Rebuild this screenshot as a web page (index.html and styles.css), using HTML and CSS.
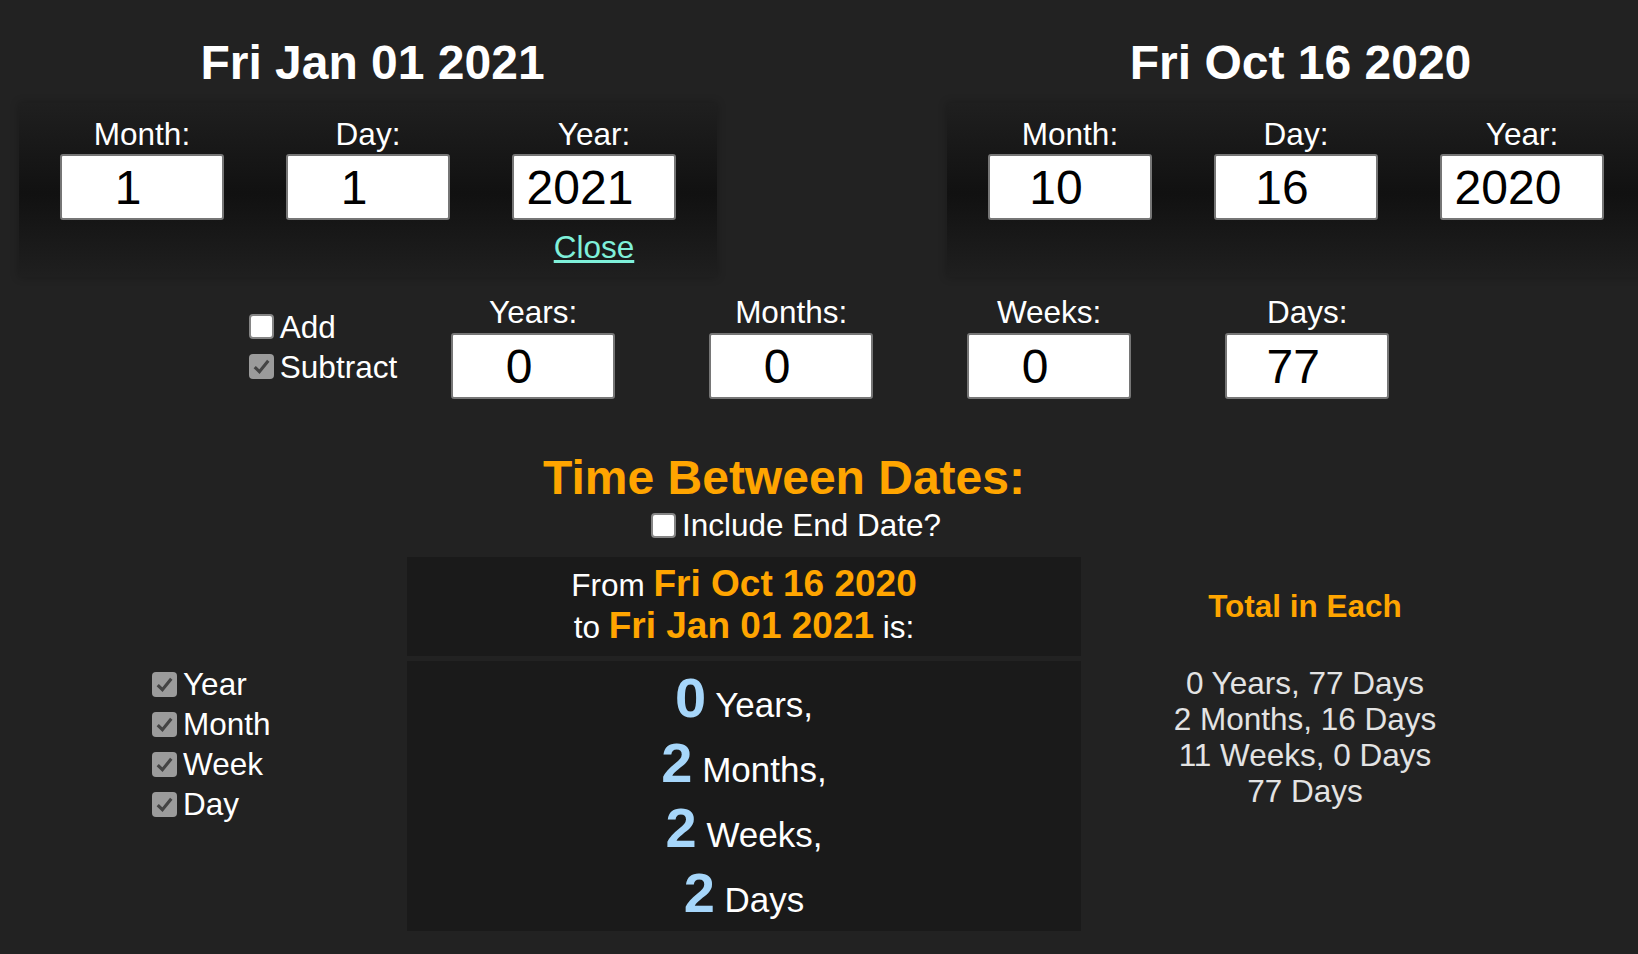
FILE: index.html
```html
<!DOCTYPE html>
<html lang="en">
<head>
    <meta charset="UTF-8">
    <meta name="viewport" content="width=device-width, initial-scale=1.0">
    <title>Date Calculator</title>
    <link rel="stylesheet" href="styles.css">
</head>
<body>
    <div class="dates">
        <div class="date-col">
            <h1 class="date-title">Fri Jan 01 2021</h1>
            <div class="panel">
                <div class="fields">
                    <div class="field">
                        <label>Month:</label>
                        <input class="num" type="text" value="1">
                    </div>
                    <div class="field">
                        <label>Day:</label>
                        <input class="num" type="text" value="1">
                    </div>
                    <div class="field">
                        <label>Year:</label>
                        <input class="num" type="text" value="2021">
                        <a href="#" class="close">Close</a>
                    </div>
                </div>
            </div>
        </div>
        <div class="date-col">
            <h1 class="date-title">Fri Oct 16 2020</h1>
            <div class="panel">
                <div class="fields">
                    <div class="field">
                        <label>Month:</label>
                        <input class="num" type="text" value="10">
                    </div>
                    <div class="field">
                        <label>Day:</label>
                        <input class="num" type="text" value="16">
                    </div>
                    <div class="field">
                        <label>Year:</label>
                        <input class="num" type="text" value="2020">
                    </div>
                </div>
            </div>
        </div>
    </div>

    <div class="adjust">
        <div class="modes">
            <label class="check"><span class="box off"></span>Add</label>
            <label class="check"><span class="box on"><svg viewBox="0 0 24 24"><path d="M5.5 12.5 L10 17 L18.5 6.5"/></svg></span>Subtract</label>
        </div>
        <div class="fields">
            <div class="field">
                <label>Years:</label>
                <input class="num" type="text" value="0">
            </div>
            <div class="field">
                <label>Months:</label>
                <input class="num" type="text" value="0">
            </div>
            <div class="field">
                <label>Weeks:</label>
                <input class="num" type="text" value="0">
            </div>
            <div class="field">
                <label>Days:</label>
                <input class="num" type="text" value="77">
            </div>
        </div>
    </div>

    <h2 class="between">Time Between Dates:</h2>
    <div class="include">
        <label class="check"><span class="box off"></span>Include End Date?</label>
    </div>

    <div class="results">
        <div class="units">
            <label class="check"><span class="box on"><svg viewBox="0 0 24 24"><path d="M5.5 12.5 L10 17 L18.5 6.5"/></svg></span>Year</label>
            <label class="check"><span class="box on"><svg viewBox="0 0 24 24"><path d="M5.5 12.5 L10 17 L18.5 6.5"/></svg></span>Month</label>
            <label class="check"><span class="box on"><svg viewBox="0 0 24 24"><path d="M5.5 12.5 L10 17 L18.5 6.5"/></svg></span>Week</label>
            <label class="check"><span class="box on"><svg viewBox="0 0 24 24"><path d="M5.5 12.5 L10 17 L18.5 6.5"/></svg></span>Day</label>
        </div>
        <div class="answer">
            <div class="from">
                From <b>Fri Oct 16 2020</b><br>
                to <b>Fri Jan 01 2021</b> is:
            </div>
            <div class="count">
                <div><b>0</b> Years,</div>
                <div><b>2</b> Months,</div>
                <div><b>2</b> Weeks,</div>
                <div><b>2</b> Days</div>
            </div>
        </div>
        <div class="totals">
            <h3>Total in Each</h3>
            <p>0 Years, 77 Days</p>
            <p>2 Months, 16 Days</p>
            <p>11 Weeks, 0 Days</p>
            <p>77 Days</p>
        </div>
    </div>
</body>
</html>
```

FILE: styles.css
```css
html, body {
    overflow: hidden;
}
body {
    margin: 0;
    background-color: #222;
    color: #fff;
    font-family: "Liberation Sans", Arial, Helvetica, sans-serif;
    font-size: 31.5px;
    line-height: 36px;
}

/* two date pickers */
.dates {
    display: flex;
    gap: 230px;
    padding: 35px 0 0 19px;
}
.date-col {
    width: 698px;
    flex-shrink: 0;
    display: flex;
    flex-direction: column;
}
.date-title {
    margin: 0 0 13px;
    padding-left: 9px;
    font-size: 48px;
    line-height: 55px;
    text-align: center;
}
.panel {
    flex: 1;
    padding: 13px 0 12px;
    background: linear-gradient(#1f1f1f, #111 52%, #1f1f1f);
    box-shadow: 0 0 8px rgba(0, 0, 0, 0.25);
}
.fields {
    display: flex;
    justify-content: center;
    gap: 62px;
}
.field {
    display: flex;
    flex-direction: column;
    align-items: center;
}
.field .num {
    margin-top: 2px;
}
.num {
    box-sizing: border-box;
    width: 164px;
    height: 66px;
    padding: 0 30px 0 2px;
    border: 2px solid #767676;
    border-radius: 3px;
    background-color: #fff;
    color: #000;
    font-family: "Liberation Sans", Arial, sans-serif;
    font-size: 48px;
    text-align: center;
}
.close {
    margin-top: 9px;
    color: #7ff0da;
}

/* add / subtract row */
.adjust {
    display: flex;
    justify-content: center;
    align-items: center;
    margin-top: 17px;
}
.adjust .fields {
    gap: 94px;
}
.adjust .field .num {
    margin-top: 3px;
}
.modes {
    margin-right: 54px;
}
.check {
    display: flex;
    align-items: center;
    height: 40px;
}
.box {
    box-sizing: border-box;
    width: 25px;
    height: 25px;
    margin-right: 6px;
    border-radius: 4px;
}
.box.off {
    background-color: #fff;
    border: 2px solid #858585;
}
.box.on {
    background-color: #9b9b9b;
}
.box svg {
    display: block;
    width: 25px;
    height: 25px;
}
.box path {
    fill: none;
    stroke: #444;
    stroke-width: 3;
}

/* time between */
.between {
    margin: 51px 0 0;
    padding-right: 70px;
    font-size: 48px;
    line-height: 55px;
    text-align: center;
    color: #ffa500;
}
.include {
    display: flex;
    justify-content: center;
    margin-top: 2px;
    padding-right: 46px;
}
.include .check {
    height: 36px;
}
.results {
    display: flex;
    margin-top: 14px;
}
.units {
    box-sizing: border-box;
    width: 407px;
    padding-left: 152px;
    display: flex;
    flex-direction: column;
    justify-content: center;
}
.answer {
    width: 674px;
    display: flex;
    flex-direction: column;
    gap: 5px;
}
.from, .count {
    background-color: #1a1a1a;
    text-align: center;
    line-height: normal;
}
.from {
    padding: 6px 0 9px;
}
.from b {
    font-size: 37px;
    color: #ffa500;
}
.count {
    padding: 4px 0 6px;
    font-size: 35px;
}
.count b {
    font-size: 56px;
    color: #a6d6fa;
}
.totals {
    width: 448px;
    padding-top: 31px;
    text-align: center;
}
.totals h3 {
    margin: 0 0 41px;
    font-size: 31.5px;
    color: #ffa500;
}
.totals p {
    margin: 0;
    color: #e3e3e3;
}
```
